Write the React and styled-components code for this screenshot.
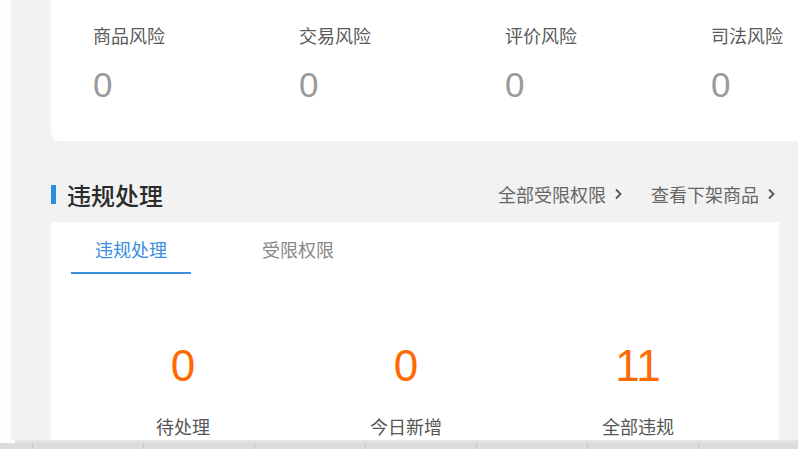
import React from 'react';
import styled, { createGlobalStyle } from 'styled-components';

const Global = createGlobalStyle`
  html, body {
    margin: 0;
    padding: 0;
    background: #fff;
    font-family: "Liberation Sans", "Noto Sans CJK SC", sans-serif;
  }
`;

const Screen = styled.div`
  height: 100vh;
  display: flex;
  flex-direction: column;
  overflow: hidden;
`;

const Body = styled.div`
  flex: 1;
  min-height: 0;
  display: flex;
`;

const Gutter = styled.div`
  width: 11px;
  background: #fdfdfd;
`;

const Main = styled.div`
  flex: 1;
  min-width: 0;
  background: #f2f2f2;
  padding: 0 19px 0 40px;
  overflow: hidden;
`;

const RiskCard = styled.div`
  display: flex;
  margin-right: -80px;
  padding: 25px 0 38px 42px;
  background: #fff;
  border-bottom-left-radius: 8px;
`;

const RiskItem = styled.div`
  width: 206px;
  flex-shrink: 0;
`;

const RiskLabel = styled.div`
  font-size: 18px;
  line-height: 24px;
  color: #5a5a5a;
`;

const RiskValue = styled.div`
  margin-top: 18px;
  font-size: 35px;
  line-height: 36px;
  color: #9a9a9a;
`;

const SectionHead = styled.div`
  display: flex;
  align-items: center;
  justify-content: space-between;
  height: 40px;
  margin: 33px 4px 8px 0;
`;

const Title = styled.h2`
  margin: 0;
  display: flex;
  align-items: center;
  font-size: 24px;
  font-weight: 500;
  color: #2b2b2b;
  &::before {
    content: '';
    width: 5px;
    height: 19px;
    margin-right: 11px;
    background: #2a8fe0;
  }
`;

const Links = styled.div`
  display: flex;
  gap: 29px;
`;

const LinkItem = styled.a`
  display: flex;
  align-items: center;
  gap: 9px;
  font-size: 18px;
  color: #666;
  text-decoration: none;
  cursor: pointer;
`;

const PanelCard = styled.div`
  background: #fff;
  height: 400px;
`;

const Tabs = styled.div`
  display: flex;
  gap: 47px;
  padding-left: 20px;
`;

const Tab = styled.div`
  width: 120px;
  padding: 17px 0 9px;
  text-align: center;
  font-size: 18px;
  line-height: 24px;
  color: ${p => (p.$active ? '#3a8ede' : '#888')};
  border-bottom: 2px solid ${p => (p.$active ? '#3a8ede' : 'transparent')};
  cursor: pointer;
`;

const StatRow = styled.div`
  display: flex;
  justify-content: space-around;
  padding: 70px 25px 0;
`;

const Stat = styled.div`
  display: flex;
  flex-direction: column;
  align-items: center;
`;

const StatValue = styled.div`
  font-size: 44px;
  line-height: 44px;
  color: #ff6a00;
`;

const StatLabel = styled.div`
  margin-top: 28px;
  font-size: 18px;
  line-height: 24px;
  color: #555;
`;

const Strip = styled.div`
  height: 9px;
  flex-shrink: 0;
  display: flex;
  flex-direction: column;
  background: #fff;
`;

const StripTop = styled.div`
  height: 3px;
  margin-left: 15px;
  background: #e4e4e4;
`;

const StripBottom = styled.div`
  flex: 1;
  display: flex;
  padding-left: 32px;
  background: #dcdcdc;
`;

const Segment = styled.div`
  width: 110px;
  flex-shrink: 0;
  border-left: 1px solid #c6c6c6;
`;

const Chevron = () => (
  <svg width="7" height="12" viewBox="0 0 7 12">
    <path d="M1 1.5 L5.5 6 L1 10.5" fill="none" stroke="#555" strokeWidth="1.8" />
  </svg>
);

const risks = ['商品风险', '交易风险', '评价风险', '司法风险'];
const stats = [
  { label: '待处理', value: 0 },
  { label: '今日新增', value: 0 },
  { label: '全部违规', value: 11 },
];

export default function App() {
  return (
    <Screen>
      <Global />
      <Body>
        <Gutter />
        <Main>
          <RiskCard>
            {risks.map(r => (
              <RiskItem key={r}>
                <RiskLabel>{r}</RiskLabel>
                <RiskValue>0</RiskValue>
              </RiskItem>
            ))}
          </RiskCard>
          <SectionHead>
            <Title>违规处理</Title>
            <Links>
              <LinkItem>全部受限权限<Chevron /></LinkItem>
              <LinkItem>查看下架商品<Chevron /></LinkItem>
            </Links>
          </SectionHead>
          <PanelCard>
            <Tabs>
              <Tab $active>违规处理</Tab>
              <Tab>受限权限</Tab>
            </Tabs>
            <StatRow>
              {stats.map(s => (
                <Stat key={s.label}>
                  <StatValue>{s.value}</StatValue>
                  <StatLabel>{s.label}</StatLabel>
                </Stat>
              ))}
            </StatRow>
          </PanelCard>
        </Main>
      </Body>
      <Strip>
        <StripTop />
        <StripBottom>
          {Array.from({ length: 7 }).map((_, i) => (
            <Segment key={i} />
          ))}
        </StripBottom>
      </Strip>
    </Screen>
  );
}
